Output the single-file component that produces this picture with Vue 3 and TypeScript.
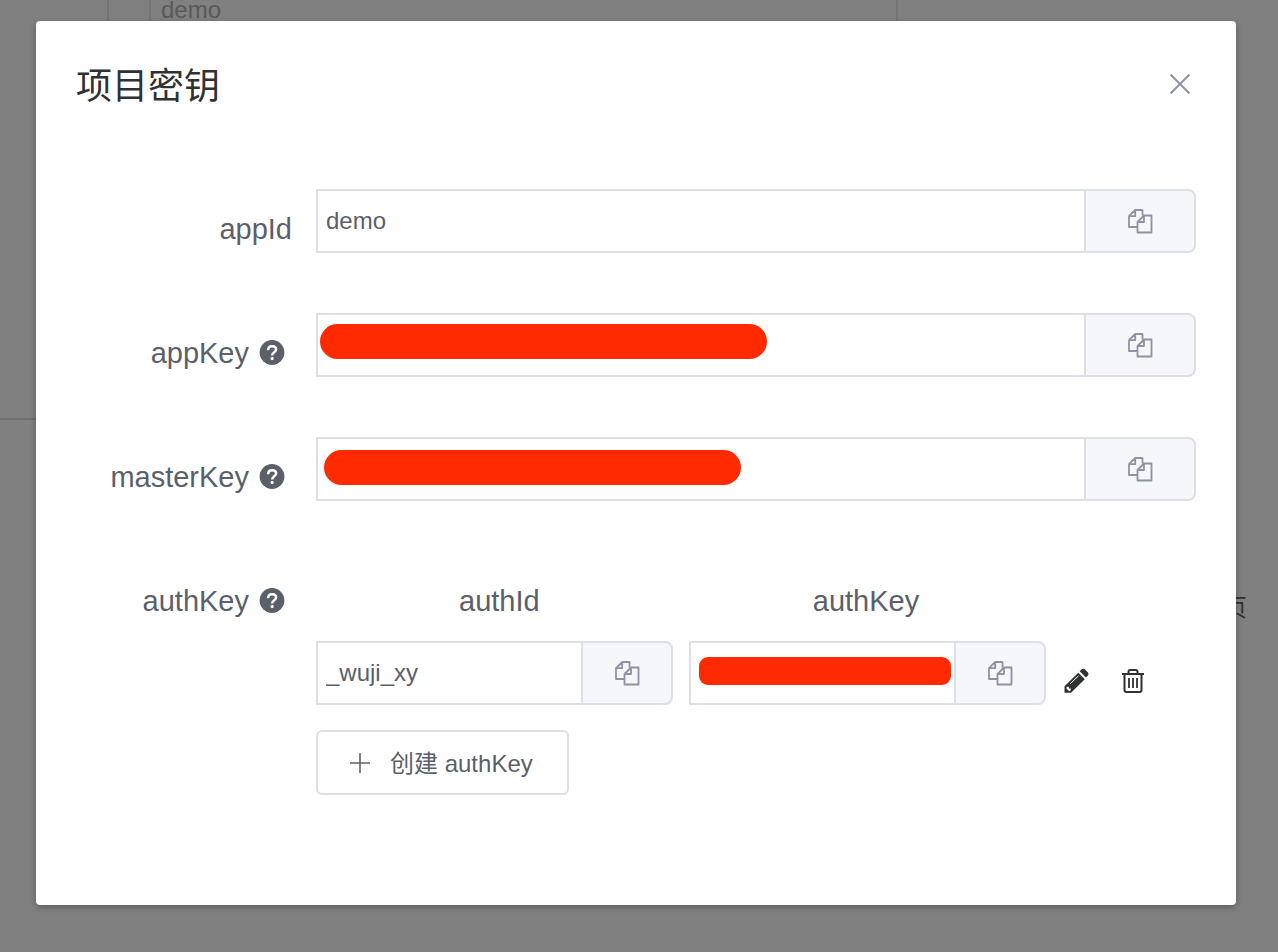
<script setup lang="ts">
import { ref } from 'vue'

interface KeyField {
  id: string
  label: string
  value: string
  help: boolean
  mask: string
}

const fields = ref<KeyField[]>([
  { id: 'app-id', label: 'appId', value: 'demo', help: false, mask: '' },
  { id: 'app-key', label: 'appKey', value: '', help: true, mask: 'mask-app' },
  { id: 'master-key', label: 'masterKey', value: '', help: true, mask: 'mask-master' },
])

const authId = ref('_wuji_xy')
const authKey = ref('')

const copyPath =
  'M17 7.5H24.5V24.5H10.5V14L17 7.5V14H10.5M15.5 7.5V2H8.2L2 8.2V19H10.5M8.2 2V8.2H2'
const questionPath =
  'M9.1 10.2C9.1 7.6 10.8 6.2 13.1 6.2C15.4 6.2 17.1 7.6 17.1 9.6C17.1 12.2 13.1 12.4 13.1 15.4'
</script>

<template>
  <div class="page">
    <div class="backdrop" aria-hidden="true">
      <i class="line line-a"></i>
      <i class="line line-b"></i>
      <i class="line line-c"></i>
      <i class="rule"></i>
      <span class="under-name">demo</span>
      <span class="under-page">页</span>
    </div>

    <section class="dialog" role="dialog" aria-labelledby="dialog-title">
      <header class="head">
        <h1 id="dialog-title">项目密钥</h1>
        <button class="plain" type="button" aria-label="关闭">
          <svg width="32" height="32" viewBox="0 0 32 32">
            <path d="M6.5 5.5L25.5 24.5M25.5 5.5L6.5 24.5" fill="none" stroke="#8d93a0" stroke-width="2" />
          </svg>
        </button>
      </header>

      <form class="form" @submit.prevent>
        <div v-for="f in fields" :key="f.id" class="row">
          <label class="label" :for="f.id">
            {{ f.label }}
            <svg v-if="f.help" class="help" width="26" height="26" viewBox="0 0 26 26">
              <circle cx="13" cy="12.5" r="12.4" fill="#5b5f69" />
              <path :d="questionPath" fill="none" stroke="#fff" stroke-width="2.5" />
              <rect x="11.6" y="17" width="3" height="3" rx="1" fill="#fff" />
            </svg>
          </label>
          <div class="group">
            <input :id="f.id" v-model="f.value" type="text" readonly />
            <button class="addon" type="button" aria-label="复制">
              <svg width="26" height="26" viewBox="0 0 26 26"><path :d="copyPath" /></svg>
            </button>
            <span v-if="f.mask" class="mask" :class="f.mask"></span>
          </div>
        </div>

        <div class="row">
          <span class="label">
            authKey
            <svg class="help" width="26" height="26" viewBox="0 0 26 26">
              <circle cx="13" cy="12.5" r="12.4" fill="#5b5f69" />
              <path :d="questionPath" fill="none" stroke="#fff" stroke-width="2.5" />
              <rect x="11.6" y="17" width="3" height="3" rx="1" fill="#fff" />
            </svg>
          </span>
          <div class="auth">
            <div class="auth-head">
              <label for="auth-id">authId</label>
              <label for="auth-key">authKey</label>
            </div>
            <div class="auth-row">
              <div class="group small">
                <input id="auth-id" v-model="authId" type="text" readonly />
                <button class="addon" type="button" aria-label="复制">
                  <svg width="26" height="26" viewBox="0 0 26 26"><path :d="copyPath" /></svg>
                </button>
              </div>
              <div class="group small">
                <input id="auth-key" v-model="authKey" type="text" readonly />
                <button class="addon" type="button" aria-label="复制">
                  <svg width="26" height="26" viewBox="0 0 26 26"><path :d="copyPath" /></svg>
                </button>
                <span class="mask mask-auth"></span>
              </div>
              <div class="actions">
                <button class="plain" type="button" aria-label="编辑">
                  <svg width="26" height="26" viewBox="0 0 26 26">
                    <path d="M0.5 24.8V18.3L14.3 4.7L20.8 11.2L7 24.8Z" fill="#303133" />
                    <path d="M15.7 3.3L17.8 1.3Q19.3 0 20.8 1.3L23.9 4.4Q25.2 5.9 23.9 7.4L21.9 9.5Z" fill="#303133" />
                    <path d="M6 16L14.5 7.8" fill="none" stroke="#fff" stroke-width="1" />
                    <path d="M3 18.7L4.9 18.7L4.9 20.5L6.7 20.5L6.7 22.3L5.2 23.2L2.2 20.3Z" fill="#fff" />
                  </svg>
                </button>
                <button class="plain" type="button" aria-label="删除">
                  <svg width="26" height="26" viewBox="0 0 26 26" fill="none" stroke="#303133" stroke-width="2">
                    <path d="M2 6H24M8.5 6V4Q8.5 2 10.5 2H15.5Q17.5 2 17.5 4V6M4.5 6V22Q4.5 24 6.5 24H19.5Q21.5 24 21.5 22V6" />
                    <path d="M9 10V20M13 10V20M17 10V20" stroke-width="1.8" />
                  </svg>
                </button>
              </div>
            </div>
            <button class="create" type="button">
              <svg width="24" height="24" viewBox="0 0 24 24">
                <path d="M12 2V22M2 12H22" fill="none" stroke="#606266" stroke-width="1.6" />
              </svg>
              <span>创建 authKey</span>
            </button>
          </div>
        </div>
      </form>
    </section>
  </div>
</template>

<style>
body {
  margin: 0;
  background: #808080;
}
</style>

<style scoped>
.page {
  position: relative;
  box-sizing: border-box;
  min-height: 100vh;
  padding: 21px 42px 47px 36px;
  background: #808080;
  color: #5b5f69;
  font-family: "Liberation Sans", "Noto Sans CJK SC", sans-serif;
  font-size: 24px;
}
.backdrop {
  position: absolute;
  inset: 0;
  overflow: hidden;
}
.line {
  position: absolute;
  top: 0;
  width: 2px;
  height: 40px;
  background: #757577;
}
.line-a { left: 107px; }
.line-b { left: 149px; }
.line-c { left: 896px; }
.rule {
  position: absolute;
  top: 418px;
  left: 0;
  width: 60px;
  height: 2px;
  background: #707173;
}
.under-name {
  position: absolute;
  top: -6px;
  left: 161px;
  line-height: 32px;
  color: #58595b;
}
.under-page {
  position: absolute;
  top: 592px;
  right: 31px;
  line-height: 32px;
  color: #303133;
}
.dialog {
  position: relative;
  box-sizing: border-box;
  padding: 40px 40px 110px;
  border-radius: 4px;
  background: #fff;
  box-shadow: 0 2px 6px rgba(0, 0, 0, 0.3);
}
.head {
  display: flex;
  align-items: center;
  justify-content: space-between;
  height: 48px;
  margin-bottom: 80px;
}
h1 {
  margin: 0;
  padding-top: 4px;
  color: #303133;
  font-size: 36px;
  font-weight: 400;
  line-height: 48px;
}
button,
input {
  box-sizing: border-box;
  margin: 0;
  color: inherit;
  font: inherit;
}
button {
  cursor: pointer;
}
.plain {
  display: flex;
  padding: 0;
  border: 0;
  background: none;
}
.form {
  display: flex;
  flex-direction: column;
  gap: 44px;
}
.row {
  display: grid;
  grid-template-columns: 240px minmax(0, 1fr);
}
.label {
  display: flex;
  align-items: center;
  justify-content: flex-end;
  height: 80px;
  padding-right: 24px;
  font-size: 29px;
}
.help {
  margin: 0 7px 0 10px;
}
.group {
  position: relative;
  display: flex;
  height: 64px;
}
.group input {
  flex: 1;
  min-width: 0;
  padding: 0 8px;
  border: 2px solid #dcdfe6;
  border-right: 0;
  border-radius: 0;
  background: #fff;
  outline: 0;
}
.addon {
  display: flex;
  align-items: center;
  justify-content: center;
  width: 112px;
  padding: 0;
  border: 2px solid #dcdfe6;
  border-radius: 0 8px 8px 0;
  background: #f5f7fa;
}
.small .addon {
  width: 92px;
}
.addon path {
  fill: none;
  stroke: #8d93a0;
  stroke-width: 1.8;
  stroke-linejoin: round;
}
.mask {
  position: absolute;
  height: 35px;
  border-radius: 18px;
  background: #ff2a00;
}
.mask-app {
  top: 11px;
  left: 4px;
  width: 447px;
}
.mask-master {
  top: 13px;
  left: 8px;
  width: 417px;
}
.mask-auth {
  top: 16px;
  left: 10px;
  width: 252px;
  height: 28px;
  border-radius: 9px;
}
.auth-head {
  display: grid;
  grid-template-columns: 5fr 5fr 2fr;
  height: 80px;
  font-size: 29px;
  line-height: 80px;
  text-align: center;
}
.auth-row {
  display: flex;
  gap: 16px;
}
.auth-row .group {
  flex: 1;
  min-width: 0;
}
.actions {
  display: flex;
  align-items: center;
  gap: 30px;
  box-sizing: border-box;
  width: 134px;
  padding: 16px 0 0 2px;
}
.create {
  display: flex;
  align-items: center;
  gap: 18px;
  height: 65px;
  margin-top: 25px;
  padding: 0 34px 0 30px;
  border: 2px solid #dcdfe6;
  border-radius: 6px;
  background: #fff;
  line-height: 24px;
}
.create span {
  padding-top: 2px;
}
</style>
